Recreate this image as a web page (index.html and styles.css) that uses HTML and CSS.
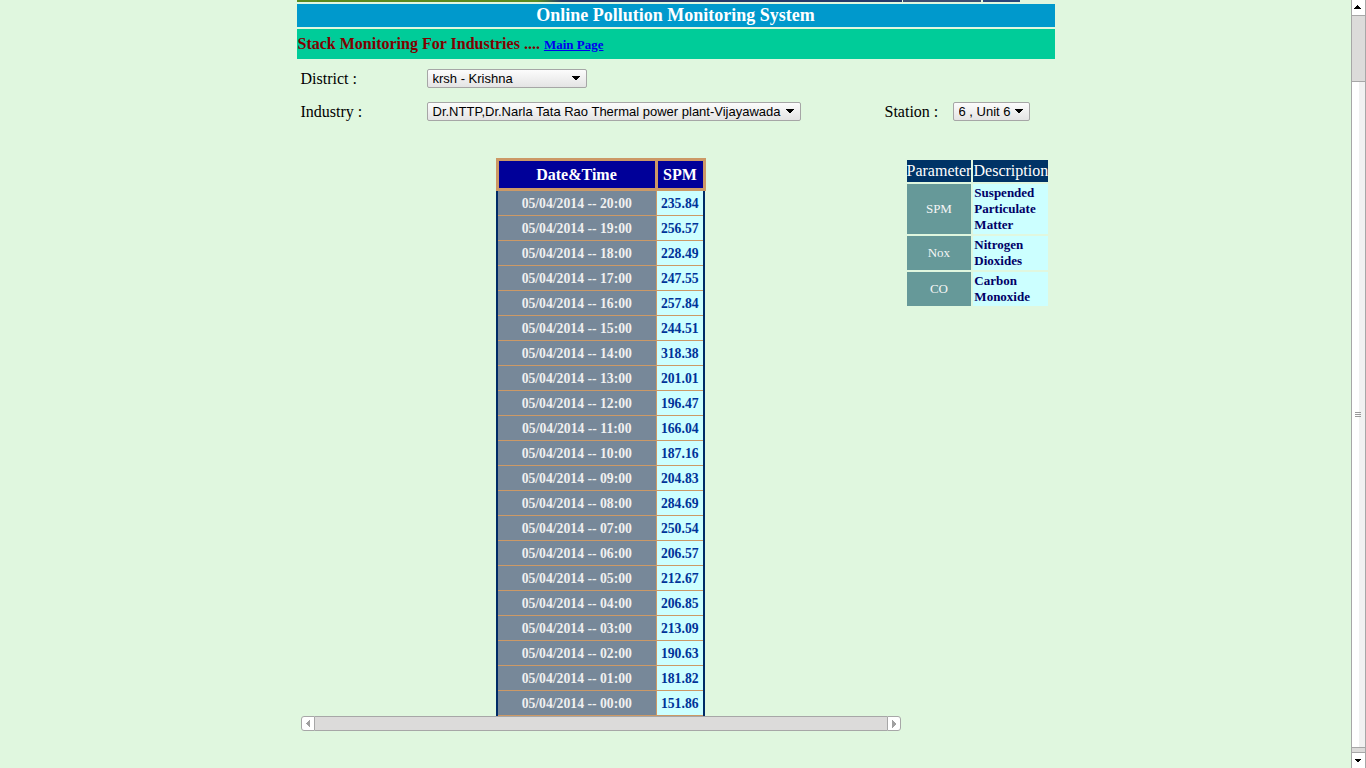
FILE: index.html
```html
<!DOCTYPE html>
<html lang="en">
<head>
<meta charset="utf-8">
<title>Online Pollution Monitoring System</title>
<link rel="stylesheet" href="styles.css">
</head>
<body>
<div class="viewport">
  <div class="page">
    <div class="banner"><span class="b1"></span><span class="b2"></span><span class="b3"></span></div>
    <div class="title">Online Pollution Monitoring System</div>
    <div class="subbar"><span class="subtitle">Stack Monitoring For Industries ....</span> <a href="#" class="mainlink">Main Page</a></div>
    <form class="filters">
      <label class="lbl">District :</label>
      <select class="sel sel-district"><option>krsh - Krishna</option></select>
      <span></span><span></span>
      <label class="lbl">Industry :</label>
      <select class="sel sel-industry"><option>Dr.NTTP,Dr.Narla Tata Rao Thermal power plant-Vijayawada</option></select>
      <label class="lbl">Station :</label>
      <select class="sel sel-station"><option>6 , Unit 6</option></select>
    </form>
    <div class="main">
      <div class="scroller">
        <div class="scroll-area">
          <table class="data">
            <thead>
              <tr><th class="dt">Date&amp;Time</th><th class="spm">SPM</th></tr>
            </thead>
            <tbody>
              <tr><td class="d">05/04/2014 -- 20:00</td><td class="v">235.84</td></tr>
              <tr><td class="d">05/04/2014 -- 19:00</td><td class="v">256.57</td></tr>
              <tr><td class="d">05/04/2014 -- 18:00</td><td class="v">228.49</td></tr>
              <tr><td class="d">05/04/2014 -- 17:00</td><td class="v">247.55</td></tr>
              <tr><td class="d">05/04/2014 -- 16:00</td><td class="v">257.84</td></tr>
              <tr><td class="d">05/04/2014 -- 15:00</td><td class="v">244.51</td></tr>
              <tr><td class="d">05/04/2014 -- 14:00</td><td class="v">318.38</td></tr>
              <tr><td class="d">05/04/2014 -- 13:00</td><td class="v">201.01</td></tr>
              <tr><td class="d">05/04/2014 -- 12:00</td><td class="v">196.47</td></tr>
              <tr><td class="d">05/04/2014 -- 11:00</td><td class="v">166.04</td></tr>
              <tr><td class="d">05/04/2014 -- 10:00</td><td class="v">187.16</td></tr>
              <tr><td class="d">05/04/2014 -- 09:00</td><td class="v">204.83</td></tr>
              <tr><td class="d">05/04/2014 -- 08:00</td><td class="v">284.69</td></tr>
              <tr><td class="d">05/04/2014 -- 07:00</td><td class="v">250.54</td></tr>
              <tr><td class="d">05/04/2014 -- 06:00</td><td class="v">206.57</td></tr>
              <tr><td class="d">05/04/2014 -- 05:00</td><td class="v">212.67</td></tr>
              <tr><td class="d">05/04/2014 -- 04:00</td><td class="v">206.85</td></tr>
              <tr><td class="d">05/04/2014 -- 03:00</td><td class="v">213.09</td></tr>
              <tr><td class="d">05/04/2014 -- 02:00</td><td class="v">190.63</td></tr>
              <tr><td class="d">05/04/2014 -- 01:00</td><td class="v">181.82</td></tr>
              <tr><td class="d">05/04/2014 -- 00:00</td><td class="v">151.86</td></tr>
            </tbody>
          </table>
        </div>
        <div class="hbar">
          <span class="hbtn hbtn-left"></span>
          <span class="htrack"></span>
          <span class="hbtn hbtn-right"></span>
        </div>
      </div>
      <table class="params">
        <tr><th>Parameter</th><th>Description</th></tr>
        <tr><td class="pn">SPM</td><td class="pd">Suspended Particulate Matter</td></tr>
        <tr><td class="pn">Nox</td><td class="pd">Nitrogen Dioxides</td></tr>
        <tr><td class="pn">CO</td><td class="pd">Carbon Monoxide</td></tr>
      </table>
    </div>
  </div>
</div>
<div class="vbar">
  <span class="vbtn vbtn-up"></span>
  <span class="vpiece vpiece-top"></span>
  <span class="vthumb"></span>
  <span class="vpiece vpiece-bottom"></span>
  <span class="vbtn vbtn-down"></span>
</div>
</body>
</html>
```
FILE: styles.css
```css
html, body {
  margin: 0;
  height: 768px;
  overflow: hidden;
  background: #e0f7df;
}
body {
  display: flex;
  font-family: "Liberation Serif", "Times New Roman", serif;
  color: #000;
}
.viewport {
  flex: 1;
  overflow: hidden;
}
.page {
  width: 758px;
  margin: 0 auto;
}
.banner {
  display: flex;
  height: 2px;
  margin-bottom: 2px;
}
.banner .b1 {
  width: 605px;
  background: linear-gradient(to right, #5a8a1e 0, #5a8a1e 240px, #263a6a 265px, #263a6a 100%);
}
.banner .b2 { width: 78px; margin-left: 1px; background: #3d4e72; }
.banner .b3 { width: 37px; margin-left: 2px; background: #2b4578; }

.title {
  height: 23px;
  line-height: 23px;
  background: #0099cc;
  color: #fff;
  text-align: center;
  font-weight: bold;
  font-size: 18px;
  margin-bottom: 2px;
}
.subbar {
  height: 30px;
  line-height: 30px;
  background: #00cc99;
  padding-left: 1px;
}
.subtitle {
  color: #800000;
  font-weight: bold;
  font-size: 16px;
}
.mainlink {
  color: #0000ee;
  font-weight: bold;
  font-size: 13px;
  text-decoration: underline;
}

.filters {
  display: grid;
  grid-template-columns: 126px 458px 68px auto;
  grid-auto-rows: 19px;
  row-gap: 14px;
  align-items: center;
  padding-left: 4px;
  margin: 10px 0 0;
}
.lbl { font-size: 16px; line-height: 19px; }
.sel {
  -webkit-appearance: none;
  appearance: none;
  height: 19px;
  margin: 0;
  padding: 0 18px 0 5px;
  border: 1px solid #a6a6a6;
  border-radius: 2px;
  font-family: "Liberation Sans", Arial, sans-serif;
  font-size: 13px;
  color: #000;
  background:
    linear-gradient(to top right, transparent 50%, #000 50%) right 10px top 6px / 4px 5px no-repeat,
    linear-gradient(to top left, transparent 50%, #000 50%) right 6px top 6px / 4px 5px no-repeat,
    linear-gradient(#fcfcfc, #e4e4e4);
}
.sel-district { width: 160px; }
.sel-industry { width: 374px; }
.sel-station { width: 77px; }

.main {
  display: flex;
  align-items: flex-start;
  gap: 4px;
  padding-left: 4px;
  margin-top: 37px;
}
.scroller {
  width: 600px;
  display: flex;
  flex-direction: column;
}
.scroll-area { overflow: hidden; }
.data {
  border-collapse: collapse;
  margin: 0 auto;
  border-left: 2px solid #002b66;
  border-right: 2px solid #002b66;
}
.data th {
  background: #000099;
  color: #fff;
  font-size: 16px;
  font-weight: bold;
  border: 3px solid #cc9966;
  height: 27px;
  padding: 0;
}
.data th.dt { width: 156px; }
.data th.spm { width: 45px; }
.data td {
  border: 1px solid #cc9966;
  height: 23px;
  padding: 1px 0 0;
  text-align: center;
  font-size: 13.7px;
  font-weight: bold;
}
.data td.d { background: #778899; color: #f0f0f0; }
.data td.v { background: #ccffff; color: #003399; }

.hbar {
  display: flex;
  height: 15px;
}
.htrack {
  flex: 1;
  background: #dcdbda;
  border-top: 1px solid #a7a7a7;
  border-bottom: 1px solid #a7a7a7;
}
.hbtn {
  width: 12px;
  border: 1px solid #a7a7a7;
  background-color: #fff;
}
.hbtn-left {
  border-radius: 3px 0 0 3px;
  background:
    linear-gradient(to bottom right, transparent 50%, #a0a0a0 50%) 4px 3px / 4px 4px no-repeat,
    linear-gradient(to top right, transparent 50%, #a0a0a0 50%) 4px 7px / 4px 4px no-repeat,
    #fff;
}
.hbtn-right {
  border-radius: 0 3px 3px 0;
  background:
    linear-gradient(to bottom left, transparent 50%, #a0a0a0 50%) 4px 3px / 4px 4px no-repeat,
    linear-gradient(to top left, transparent 50%, #a0a0a0 50%) 4px 7px / 4px 4px no-repeat,
    #fff;
}

.params {
  border-collapse: separate;
  border-spacing: 2px;
  margin-top: 0;
}
.params th {
  background: #003366;
  color: #fff;
  font-weight: normal;
  font-size: 16px;
  height: 22px;
  padding: 0;
  line-height: 18px;
}
.params td { padding: 1px; font-size: 13px; line-height: 16px; }
.params td.pn {
  background: #669999;
  color: #f5f5f5;
  text-align: center;
}
.params td.pd {
  background: #ccffff;
  color: #000066;
  font-weight: bold;
  width: 73px;
  height: 32px;
}

/* page scrollbar */
.vbar {
  width: 13px;
  flex: none;
  display: flex;
  flex-direction: column;
  border-left: 1px solid #a7a7a7;
  border-right: 1px solid #a7a7a7;
}
.vbtn { flex: none; background-color: #fff; }
.vbtn-up {
  height: 15px;
  background:
    linear-gradient(to bottom right, transparent 50%, #000 50%) 2px 5px / 4px 4px no-repeat,
    linear-gradient(to bottom left, transparent 50%, #000 50%) 6px 5px / 4px 4px no-repeat,
    #fff;
}
.vbtn-down {
  height: 15px;
  background:
    linear-gradient(to top right, transparent 50%, #000 50%) 2px 6px / 4px 4px no-repeat,
    linear-gradient(to top left, transparent 50%, #000 50%) 6px 6px / 4px 4px no-repeat,
    #fff;
}
.vpiece { flex: none; background: #dcdbda; border-top: 1px solid #a7a7a7; border-bottom: 1px solid #a7a7a7; }
.vpiece-top { height: 65px; }
.vpiece-bottom { height: 4px; }
.vthumb {
  flex: 1;
  background:
    linear-gradient(#9a9a9a, #9a9a9a) 3px calc(50% - 2px) / 6px 1px no-repeat,
    linear-gradient(#9a9a9a, #9a9a9a) 3px 50% / 6px 1px no-repeat,
    linear-gradient(#9a9a9a, #9a9a9a) 3px calc(50% + 2px) / 6px 1px no-repeat,
    linear-gradient(to right, #ffffff 55%, #f1f1f1 56%);
}
```
